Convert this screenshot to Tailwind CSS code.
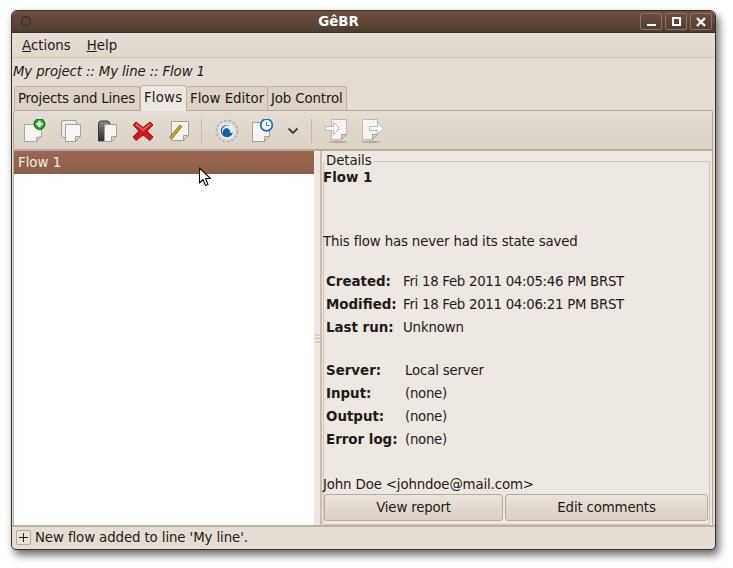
<!DOCTYPE html>
<html>
<head>
<meta charset="utf-8">
<script src="https://cdn.jsdelivr.net/npm/@tailwindcss/browser@4"></script>
</head>
<body class="bg-white overflow-hidden">
<div class="relative w-[733px] h-[568px] pl-[11px] pt-[10px] font-['DejaVu_Sans',sans-serif] text-[13.33px] leading-[17px] text-[#1d1a17]">
  <div class="w-[705px] h-[540px] flex flex-col rounded-t-[6px] rounded-b-[5px] bg-[#e5ddd3] border border-[#3b3029] shadow-[3px_5px_9px_rgba(0,0,0,0.6)] overflow-hidden">
    <!-- title bar -->
    <div class="h-[22px] shrink-0 relative flex items-center justify-center pr-[50px] bg-gradient-to-b from-[#6e5040] to-[#4e3c32] border-b border-[#3b3029]">
      <div class="absolute left-[9px] top-[5px] w-[10px] h-[10px] rounded-full border border-[#2f2620] bg-[#5a4436]"></div>
      <span class="font-bold text-white text-[13.4px]">GêBR</span>
      <div class="absolute right-[3px] top-[2px] flex gap-[3px]">
        <div class="w-[22px] h-[17px] border border-[#8a7568] rounded-[2px] flex items-end justify-center pb-[3px]"><div class="w-[9px] h-[2px] bg-white"></div></div>
        <div class="w-[22px] h-[17px] border border-[#8a7568] rounded-[2px] flex items-center justify-center"><div class="w-[9px] h-[9px] border-2 border-white"></div></div>
        <div class="w-[22px] h-[17px] border border-[#8a7568] rounded-[2px] flex items-center justify-center"><svg width="10" height="10" viewBox="0 0 10 10"><path d="M1 1 9 9M9 1 1 9" stroke="#fff" stroke-width="2.4"/></svg></div>
      </div>
    </div>
    <!-- menu -->
    <div class="h-[25px] shrink-0 flex items-center gap-[16px] pl-[10px] border-b border-[#cfc3b5] bg-gradient-to-b from-[#e6ded4] to-[#e0d8cd] mb-px">
      <span><u>A</u>ctions</span><span><u>H</u>elp</span>
    </div>
    <!-- path -->
    <div class="h-[25px] shrink-0 flex items-center pl-[1px] italic tracking-[-0.13px]">My project :: My line :: Flow 1</div>
    <!-- tabs -->
    <div class="h-[26px] shrink-0 flex items-end pl-[2px]">
      <div class="h-[24px] w-[126px] pl-[3px] flex items-center bg-[#dcd2c6] border border-b-0 border-[#bdb09f] rounded-t-[3px] tracking-[-0.22px]">Projects and Lines</div>
      <div class="h-[26px] w-[47px] pl-[3px] flex items-center bg-[#ece7e0] border border-b-0 border-[#bdb09f] rounded-t-[3px] pb-[3px] -mb-px relative tracking-[0.2px]">Flows</div>
      <div class="h-[24px] w-[81px] pl-[3px] flex items-center bg-[#dcd2c6] border border-b-0 border-l-0 border-[#bdb09f] rounded-t-[3px]">Flow Editor</div>
      <div class="h-[24px] w-[79px] pl-[3px] flex items-center bg-[#dcd2c6] border border-b-0 border-l-0 border-[#bdb09f] rounded-t-[3px] tracking-[-0.13px]">Job Control</div>
    </div>
    <!-- notebook -->
    <div class="flex-1 min-h-0 flex flex-col ml-px mr-[2px] border border-b-0 border-[#b5a898] rounded-t-[2px]">
      <!-- toolbar -->
      <div class="h-[40px] shrink-0 flex items-center pl-[3px] pt-[2px] bg-gradient-to-b from-[#e6ded4] to-[#dbd1c5] border-b-2 border-[#b9ab9b]">
        <div class="w-[36px] h-[24px] flex justify-center">
          <svg width="26" height="24" viewBox="0 0 26 24"><path d="M2.500 5.500h17v12l-5 5h-12z" fill="#f6f5f2" stroke="#a9a59f"/><path d="M14.500 22.500v-4l5-1z" fill="#d5d2cc" stroke="#a9a59f"/><circle cx="17.500" cy="5" r="5.500" fill="#16a31d" stroke="#0c7a12"/><path d="M17.500 1.800v6.400M14.300 5h6.400" stroke="#fff" stroke-width="2.400"/></svg>
        </div>
        <div class="w-[36px] h-[24px] flex justify-center">
          <svg width="24" height="24" viewBox="0 0 24 24"><rect x="2.500" y="1.500" width="15" height="17" rx="1.500" fill="#eeedea" stroke="#a3a09a"/><path d="M6.500 5.500h15v12l-5 5h-10z" fill="#f8f7f5" stroke="#a3a09a"/><path d="M16.500 22.500v-5h5z" fill="#d8d5cf" stroke="#a3a09a"/></svg>
        </div>
        <div class="w-[36px] h-[24px] flex justify-center">
          <svg width="24" height="24" viewBox="0 0 24 24"><defs><linearGradient id="g1" x1="0" y1="0" x2="0" y2="1"><stop offset="0" stop-color="#8a8a86"/><stop offset="1" stop-color="#2c2c2a"/></linearGradient></defs><path d="M3.500 4 L5 2h8l2 2v18h-11.500z" fill="url(#g1)" stroke="#3a3a38"/><path d="M9.500 5.500h12v12l-5 5h-7z" fill="#f6f5f2" stroke="#a3a09a"/><path d="M16.500 22.500v-5h5z" fill="#d8d5cf" stroke="#a3a09a"/></svg>
        </div>
        <div class="w-[36px] h-[24px] flex justify-center">
          <svg width="24" height="24" viewBox="0 0 24 24"><path d="M5 3 12 8.500 19 3 22 6 16 12 22 18 19 21.500 12 16 5 21.500 2 18 8 12 2 6z" fill="#d9141a" stroke="#9c1417" stroke-linejoin="round"/><path d="M5.500 4.500 12 10 18.500 4.500 20 6 12 12 4 6z" fill="#ee5a5a"/></svg>
        </div>
        <div class="w-[36px] h-[24px] flex justify-center">
          <svg width="24" height="24" viewBox="0 0 24 24"><path d="M4.500 2.500h17v14l-5 5h-12z" fill="#f6f5f2" stroke="#a3a09a"/><path d="M16.500 21.500v-5h5z" fill="#d8d5cf" stroke="#a3a09a"/><path d="M3.500 19.500 14 6.500" stroke="#6f5a14" stroke-width="3.200"/><path d="M3.500 19.500 14 6.500" stroke="#e0b024" stroke-width="1.800"/></svg>
        </div>
        <div class="w-px h-[24px] bg-[#c4b8aa] ml-[4px] mr-[7px]"></div>
        <div class="w-[36px] h-[24px] flex justify-center">
          <svg width="24" height="24" viewBox="0 0 24 24"><circle cx="12" cy="12" r="10.500" fill="#dcdcda" stroke="#b0aeaa" stroke-width="1.500" stroke-dasharray="3 1.600"/><circle cx="12" cy="12" r="7.500" fill="#f4f4f2"/><circle cx="12" cy="12" r="6.200" fill="#1260b0"/><path d="M15.500 6.800A6 6 0 0 0 8 15.500a5 5 0 0 1 3-6.500 4 4 0 0 1 4 5 3 3 0 0 0 .5-7.200z" fill="#e8f0f8"/></svg>
        </div>
        <div class="w-[36px] h-[24px] flex justify-center">
          <svg width="26" height="24" viewBox="0 0 26 24"><path d="M2.500 3.500h17v14l-5 5h-12z" fill="#f6f5f2" stroke="#a3a09a"/><path d="M14.500 22.500v-5h5z" fill="#d8d5cf" stroke="#a3a09a"/><circle cx="16.500" cy="6" r="5.800" fill="#fff" stroke="#1c6db5" stroke-width="1.800"/><path d="M16.500 2.800V6.500h3" fill="none" stroke="#3a6a90" stroke-width="1"/></svg>
        </div>
        <div class="w-[16px] flex justify-center ml-[4px]">
          <svg width="12" height="8" viewBox="0 0 12 8"><path d="M1.500 1.500 6 6l4.500-4.500" fill="none" stroke="#3c3c3c" stroke-width="1.800"/></svg>
        </div>
        <div class="w-px h-[24px] bg-[#c4b8aa] ml-[10px] mr-[7px]"></div>
        <div class="w-[36px] h-[26px] flex justify-center">
          <svg width="26" height="26" viewBox="0 0 26 26"><ellipse cx="14" cy="24" rx="10" ry="1.200" fill="#b3a99c"/><path d="M7.500 1.500h15v15l-5 5h-10z" fill="#f6f5f2" stroke="#bdbab4"/><path d="M17.500 21.500v-5h5z" fill="#d8d5cf" stroke="#a3a09a"/><path d="M1.500 8.500h8v-4l6 6-6 6v-4h-8z" fill="#fafaf8" stroke="#bdbab4"/></svg>
        </div>
        <div class="w-[36px] h-[26px] flex justify-center">
          <svg width="26" height="26" viewBox="0 0 26 26"><ellipse cx="11" cy="24" rx="10" ry="1.200" fill="#b3a99c"/><path d="M2.500 1.500h15v15l-5 5h-10z" fill="#f6f5f2" stroke="#bdbab4"/><path d="M12.500 21.500v-5h5z" fill="#d8d5cf" stroke="#a3a09a"/><path d="M9.500 8.500h8v-4l6 6-6 6v-4h-8z" fill="#fafaf8" stroke="#bdbab4"/></svg>
        </div>
      </div>
      <!-- panes -->
      <div class="flex-1 min-h-0 flex">
        <div class="w-[300px] shrink-0 bg-white">
          <div class="h-[23px] flex items-center pl-[4px] text-[#f4eee8] bg-gradient-to-b from-[#9a6850] to-[#8e5e46]">Flow 1</div>
        </div>
        <div class="w-[6px] shrink-0 flex items-center justify-center bg-[#ece7e0]"><svg width="5" height="9" viewBox="0 0 5 9"><path d="M0 1h5M0 4.500h5M0 8h5" stroke="#c4b8aa"/></svg></div>
        <div class="flex-1 min-w-0 flex flex-col bg-[#ede8e2] border-l-2 border-[#c9bcad] relative pr-[2px]">
          <span class="absolute left-[3px] top-[1px] px-[1px] bg-[#ede8e2] z-10 tracking-[-0.1px]">Details</span>
          <div class="flex-1 min-h-0 flex flex-col mt-[10px] ml-px border border-[#cfc5b8] rounded-[2px]">
            <div class="flex-1 min-h-0 -ml-[1px] pt-[7px]">
              <div class="font-bold text-[13.4px]">Flow 1</div>
              <div class="mt-[47px] tracking-[-0.15px]">This flow has never had its state saved</div>
              <div class="mt-[23px] ml-[3px] grid grid-cols-[77px_1fr] gap-y-[6px]">
                <b class="text-[13.4px]">Created:</b><span class="tracking-[-0.29px]">Fri 18 Feb 2011 04:05:46 PM BRST</span>
                <b class="text-[13.4px]">Modified:</b><span class="tracking-[-0.29px]">Fri 18 Feb 2011 04:06:21 PM BRST</span>
                <b class="text-[13.4px]">Last run:</b><span class="tracking-[-0.14px]">Unknown</span>
              </div>
              <div class="mt-[26px] ml-[3px] grid grid-cols-[79px_1fr] gap-y-[6px]">
                <b class="text-[13.4px]">Server:</b><span class="tracking-[-0.17px]">Local server</span>
                <b class="text-[13.4px]">Input:</b><span class="tracking-[-0.3px]">(none)</span>
                <b class="text-[13.4px]">Output:</b><span class="tracking-[-0.3px]">(none)</span>
                <b class="text-[13.4px]">Error log:</b><span class="tracking-[-0.3px]">(none)</span>
              </div>
              <div class="mt-[28px] tracking-[-0.14px]">John Doe &lt;johndoe@mail.com&gt;</div>
            </div>
            <div class="h-[27px] mb-[3px] shrink-0 flex gap-[2px] pr-[1px]">
              <div class="w-[179px] flex items-center justify-center rounded-[3px] border border-[#b9ab9b] bg-gradient-to-b from-[#ebe4db] to-[#dad0c4] tracking-[-0.18px]">View report</div>
              <div class="flex-1 flex items-center justify-center rounded-[3px] border border-[#b9ab9b] bg-gradient-to-b from-[#ebe4db] to-[#dad0c4] tracking-[-0.15px]">Edit comments</div>
            </div>
          </div>
        </div>
      </div>
    </div>
    <!-- status -->
    <div class="h-[24px] shrink-0 flex items-center pl-[4px] gap-[4px] border-t-2 border-[#bdb09f] pb-px">
      <div class="w-[15px] h-[15px] rounded-[2px] border border-[#b5a898] flex items-center justify-center bg-[#e9e2d9]"><svg width="9" height="9" viewBox="0 0 9 9"><path d="M4.500 0v9M0 4.500h9" stroke="#222" stroke-width="1"/></svg></div>
      <span class="tracking-[-0.1px]">New flow added to line 'My line'.</span>
    </div>
  </div>
  <!-- cursor -->
  <svg class="absolute left-[198px] top-[167px]" width="14" height="21" viewBox="0 0 14 21"><path d="M1.500 1v15l3.500-3.500 2.500 6 2.500-1-2.500-6h5z" fill="#fff" stroke="#111" stroke-width="1.100" stroke-linejoin="round"/></svg>
</div>
</body>
</html>
